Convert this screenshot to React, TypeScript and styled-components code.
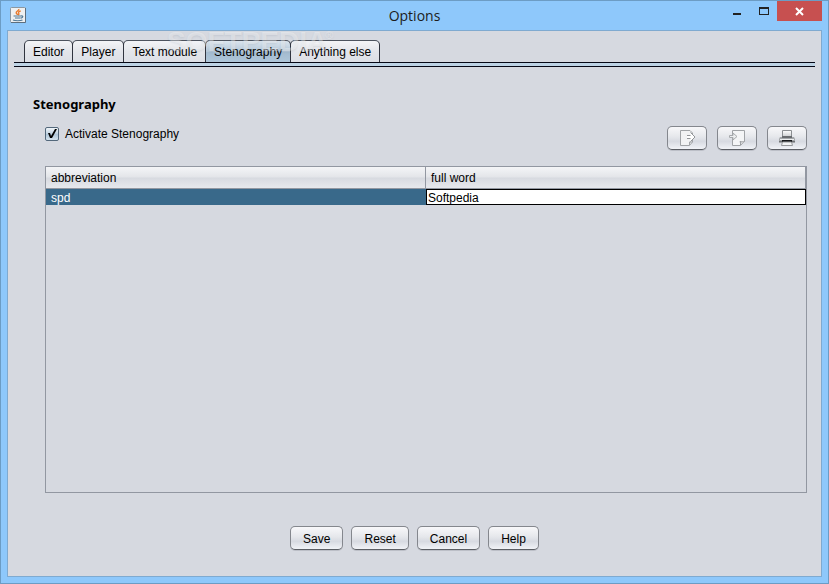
import React, { useState } from "react";
import styled, { createGlobalStyle, css } from "styled-components";

const GlobalStyle = createGlobalStyle`
  *, *::before, *::after { box-sizing: border-box; }
  body {
    margin: 0;
    background: #8ec8fb;
    color: #000;
    font: 12px/14px "Liberation Sans", Arial, sans-serif;
  }
  button, input { font: inherit; color: inherit; }
`;

const Window = styled.div`
  display: flex;
  flex-direction: column;
  min-height: 100vh;
  padding: 0 6px 6px;
  border: 1px solid #6c9cc4;
  background: #8ec8fb;
`;

const TitleBar = styled.header`
  display: grid;
  grid-template-columns: 1fr auto 1fr;
  height: 29px;
`;

const AppIcon = styled.svg`
  width: 16px;
  height: 16px;
  margin: 6px 0 0 3px;
`;

const Title = styled.h1`
  margin: 5px 0 0;
  font: 14px/20px "Open Sans", "Segoe UI", sans-serif;
  color: #1c1c1c;
`;

const WindowControls = styled.div`
  display: flex;
  justify-content: flex-end;
  align-items: flex-start;
`;

const ControlButton = styled.button<{ $kind?: "close" }>`
  width: ${(p) => (p.$kind ? 45 : 27)}px;
  height: 20px;
  padding: 0;
  border: 0;
  background: ${(p) => (p.$kind ? "#c75050" : "transparent")};
  svg { display: block; width: 100%; height: 20px; }
`;

const Client = styled.main`
  position: relative;
  flex: 1;
  display: flex;
  flex-direction: column;
  padding: 9px 6px 26px;
  border: 1px solid #7faad0;
  background: #d6d9e0;
`;

const Watermark = styled.span`
  position: absolute;
  top: -5px;
  left: 159px;
  font: bold 28px/32px "Liberation Sans", Arial, sans-serif;
  color: rgba(255, 255, 255, 0.34);
  text-shadow: 0 1px 2px rgba(100, 110, 130, 0.14);
  pointer-events: none;
  sup {
    margin-left: -2px;
    font: 11px/11px "Liberation Sans", Arial, sans-serif;
    vertical-align: 12px;
  }
`;

const TabList = styled.div`
  display: flex;
  padding-left: 10px;
`;

const Tab = styled.button<{ $active: boolean }>`
  height: 22px;
  padding: 0 8px;
  border: 1px solid #30343f;
  border-top-color: #4d535e;
  border-bottom: 0;
  border-radius: 5px 5px 0 0;
  background: linear-gradient(#f3f4f7, #e3e5ea 50%, #dcdfe6);
  & + & { margin-left: -1px; }
  ${(p) =>
    p.$active &&
    css`
      background: linear-gradient(#dbe5ee, #b4c7d8 50%, #a3bacf 51%, #aec6d9);
    `}
`;

const TabRule = styled.div`
  height: 5px;
  border: solid #060816;
  border-width: 1px 0;
  background: #bdd3e5;
`;

const Panel = styled.section`
  flex: 1;
  display: flex;
  flex-direction: column;
  padding: 27px 8px 0 19px;
`;

const Heading = styled.h2`
  margin: 0;
  font: bold 13px/20px "Noto Sans", Tahoma, sans-serif;
`;

const OptionsRow = styled.div`
  display: flex;
  justify-content: space-between;
  align-items: flex-start;
  padding-left: 12px;
`;

const CheckLabel = styled.label`
  display: flex;
  align-items: center;
  gap: 6px;
  margin-top: 12px;
`;

const CheckText = styled.span`
  padding-top: 1px;
`;

const CheckBox = styled.span`
  display: grid;
  width: 14px;
  height: 14px;
  > * { grid-area: 1 / 1; }
  svg { width: 14px; height: 14px; pointer-events: none; }
`;

const CheckInput = styled.input`
  appearance: none;
  width: 14px;
  height: 14px;
  margin: 0;
  border: 1px solid #53687b;
  border-radius: 2px;
  background: linear-gradient(#f0f5f9, #bccfdf 50%, #adc4d7 51%, #d3e2ed);
`;

const ButtonRow = styled.div<{ $gap: number; $centered?: boolean }>`
  display: flex;
  gap: ${(p) => p.$gap}px;
  ${(p) =>
    p.$centered
      ? css`
          justify-content: center;
          padding-top: 33px;
        `
      : css`
          margin-top: 12px;
        `}
`;

const Button = styled.button<{ $icon?: boolean }>`
  display: flex;
  align-items: center;
  justify-content: center;
  height: 24px;
  padding: 1px 12px 0;
  border: 1px solid #84878d;
  border-bottom-color: #5b5e64;
  border-radius: 5px;
  background: linear-gradient(#f8f8fa, #e5e7eb 45%, #d7dae1 65%, #f1f3f7);
  box-shadow: 0 1px 0 rgba(110, 115, 125, 0.25);
  ${(p) =>
    p.$icon &&
    css`
      width: 40px;
      padding: 0;
    `}
  svg { width: 18px; height: 18px; }
`;

const TableFrame = styled.div`
  flex: 1;
  margin: 16px 0 0 12px;
  border: 1px solid #9297a1;
`;

const Table = styled.table`
  width: 100%;
  border-collapse: separate;
  border-spacing: 0;
  table-layout: fixed;
`;

const HeaderCell = styled.th`
  height: 22px;
  padding: 0 5px;
  border-right: 1px solid #9297a1;
  border-bottom: 1px solid #9297a1;
  background: linear-gradient(#f4f5f7, #e3e5e9 48%, #d7dae0 52%, #e7e9ed);
  font-weight: normal;
  text-align: left;
`;

const SelectedCell = styled.td`
  height: 16px;
  padding: 2px 5px 0;
  background: #39698a;
  color: #fff;
`;

const EditorCell = styled.td`
  padding: 0;
`;

const CellInput = styled.input`
  display: block;
  width: 100%;
  height: 16px;
  padding: 1px 0 0 1px;
  border: 1px solid #000;
  border-radius: 0;
  background: #fff;
  outline: 0;
`;

const tabs = ["Editor", "Player", "Text module", "Stenography", "Anything else"];
const actions = ["Save", "Reset", "Cancel", "Help"];

const JavaIcon = () => (
  <AppIcon viewBox="0 0 16 16" aria-hidden="true">
    <rect x="0.5" y="0.5" width="15" height="15" rx="1" fill="#eef0f1" stroke="#8b98a3" />
    <path d="M1 15.5h14.5V1" fill="none" stroke="#5d6f7e" />
    <path d="M8.8 2c.6 1.700-3 2.300-2.600 3.800.2.900 1.300 1.200 1.300 2.200M10.700 3.800c-1.500.6-2.700 1.300-2 2.400.5.700.4 1.300-.5 2" fill="none" stroke="#e8792b" strokeWidth="1.400" />
    <path d="M3.500 9h7.500M5 11h5.500M11 9c2.500-.5 2.200 1.800-.2 2.200M3 13c2 1 7.500 1 9.500 0" fill="none" stroke="#4f7896" strokeWidth="1.200" />
  </AppIcon>
);

const ExportIcon = () => (
  <svg viewBox="0 0 18 18" aria-hidden="true">
    <path d="M2.500 1.500h9.500l2.500 2.500v9l-3 3.500h-9z" fill="#f1f2f3" stroke="#a0a3a6" />
    <path d="M11.500 16v-3h3" fill="#d9dbdd" stroke="#a0a3a6" />
    <path d="M9 6.500h3.500V3.500L17 8l-4.500 4.500V9.500H9z" fill="#fff" />
    <path d="M9 6.500h3.500M12.500 3.500 17 8l-4.500 4.500M9 9.500h3.500" fill="none" stroke="#929598" />
  </svg>
);

const ImportIcon = () => (
  <svg viewBox="0 0 18 18" aria-hidden="true">
    <path d="M4.500 1.500h12v11l-4 4h-8z" fill="#f4f5f6" stroke="#a0a3a6" />
    <path d="M12.500 16c.3-1.500 0-2.500-.5-3.500 1.500.5 3 .3 4.500 0" fill="#dedfe1" stroke="#999c9f" />
    <path d="M1 6h4V3.500L9.500 7.500 5 11.500V9H1z" fill="#fafafa" />
    <path d="M1.500 6.500H5V4l4 3.500L5 11V8.500H1.500z" fill="#eceeef" stroke="#a6a9ac" />
  </svg>
);

const PrinterIcon = () => (
  <svg viewBox="0 0 18 18" aria-hidden="true">
    <defs>
      <linearGradient id="printer-paper" x1="0" y1="0" x2="0" y2="1">
        <stop offset="0" stopColor="#fff" />
        <stop offset="1" stopColor="#c9cbcd" />
      </linearGradient>
    </defs>
    <path d="M4.500 8V1.500h9V8" fill="url(#printer-paper)" stroke="#8b8e91" />
    <path d="M2 8h2v-1h10v1h2l1 2v4H1v-4z" fill="#a3a6a9" />
    <path d="M4 7h10v2H4z" fill="#696c6f" />
    <path d="M2 10h14v1H2z" fill="#eceeef" />
    <path d="M1 12h16v1H1z" fill="#707376" />
    <path d="M4 11h10v2H4z" fill="#17191b" />
    <path d="M4.500 13h9l1 3.500h-11z" fill="#f3f4f5" stroke="#97999c" />
  </svg>
);

const tools = [
  { label: "Export", Icon: ExportIcon },
  { label: "Import", Icon: ImportIcon },
  { label: "Print", Icon: PrinterIcon },
];

export default function App() {
  const [active, setActive] = useState("Stenography");
  const [enabled, setEnabled] = useState(true);
  const [word, setWord] = useState("Softpedia");

  return (
    <>
      <GlobalStyle />
      <Window>
        <TitleBar>
          <JavaIcon />
          <Title>Options</Title>
          <WindowControls>
            <ControlButton aria-label="Minimize">
              <svg viewBox="0 0 27 20"><path d="M10 12h8v2h-8z" fill="#222" /></svg>
            </ControlButton>
            <ControlButton aria-label="Maximize">
              <svg viewBox="0 0 27 20"><path d="M9 6h10v8H9zM10 8v5h8V8z" fill="#222" fillRule="evenodd" /></svg>
            </ControlButton>
            <ControlButton $kind="close" aria-label="Close">
              <svg viewBox="0 0 45 20"><path d="m19 7 7 7m0-7-7 7" fill="none" stroke="#fff" strokeWidth="2" /></svg>
            </ControlButton>
          </WindowControls>
        </TitleBar>
        <Client>
          <TabList role="tablist">
            {tabs.map((name) => (
              <Tab
                key={name}
                role="tab"
                aria-selected={active === name}
                $active={active === name}
                onClick={() => setActive(name)}
              >
                {name}
              </Tab>
            ))}
          </TabList>
          <TabRule />
          <Panel>
            <Heading>Stenography</Heading>
            <OptionsRow>
              <CheckLabel>
                <CheckBox>
                  <CheckInput
                    type="checkbox"
                    checked={enabled}
                    onChange={(e) => setEnabled(e.target.checked)}
                  />
                  {enabled && (
                    <svg viewBox="0 0 14 14" aria-hidden="true">
                      <path d="M3 6h2l1 3 4-7h2L7 11H5z" fill="#000" />
                    </svg>
                  )}
                </CheckBox>
                <CheckText>Activate Stenography</CheckText>
              </CheckLabel>
              <ButtonRow $gap={10}>
                {tools.map(({ label, Icon }) => (
                  <Button key={label} $icon aria-label={label}>
                    <Icon />
                  </Button>
                ))}
              </ButtonRow>
            </OptionsRow>
            <TableFrame>
              <Table>
                <thead>
                  <tr>
                    <HeaderCell>abbreviation</HeaderCell>
                    <HeaderCell>full word</HeaderCell>
                  </tr>
                </thead>
                <tbody>
                  <tr>
                    <SelectedCell>spd</SelectedCell>
                    <EditorCell>
                      <CellInput
                        aria-label="full word"
                        value={word}
                        onChange={(e) => setWord(e.target.value)}
                      />
                    </EditorCell>
                  </tr>
                </tbody>
              </Table>
            </TableFrame>
          </Panel>
          <ButtonRow $gap={8} $centered>
            {actions.map((name) => (
              <Button key={name}>{name}</Button>
            ))}
          </ButtonRow>
          <Watermark aria-hidden="true">
            SOFTPEDIA<sup>®</sup>
          </Watermark>
        </Client>
      </Window>
    </>
  );
}
